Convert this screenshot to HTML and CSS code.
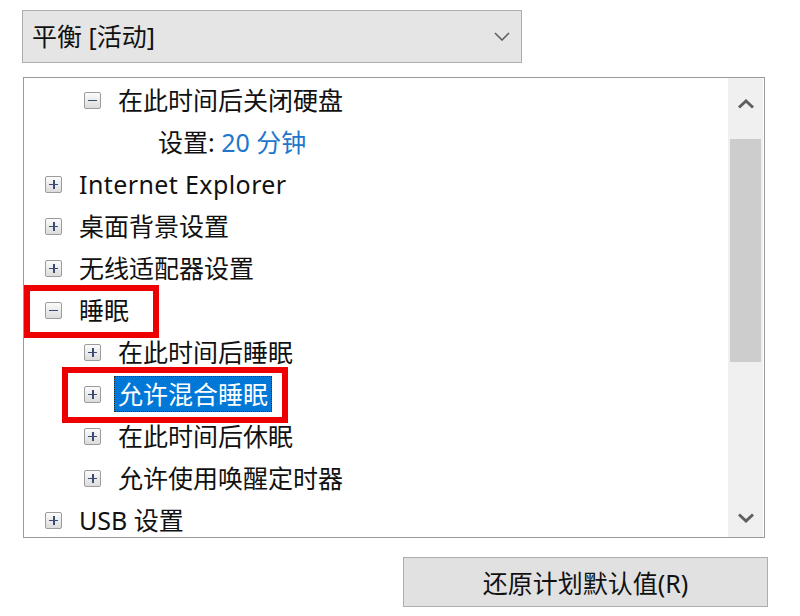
FILE: index.html
```html
<!DOCTYPE html>
<html lang="zh-CN">
<head>
<meta charset="utf-8">
<title>电源选项</title>
<link rel="stylesheet" href="styles.css">
</head>
<body>
<div class="page">
  <div class="combo">
    <span class="combo-text">平衡 [活动]</span>
    <svg class="combo-arrow" width="16" height="9" viewBox="0 0 16 9"><path d="M1 1 L8 8 L15 1" fill="none" stroke="#606060" stroke-width="1.6"/></svg>
  </div>

  <div class="tree">
    <div class="rows">
      <div class="row l1"><span class="box minus"></span><span class="label">在此时间后关闭硬盘</span></div>
      <div class="row l2"><span class="nobox"></span><span class="label">设置: <span class="value">20 分钟</span></span></div>
      <div class="row l0"><span class="box plus"></span><span class="label latin">Internet Explorer</span></div>
      <div class="row l0"><span class="box plus"></span><span class="label">桌面背景设置</span></div>
      <div class="row l0"><span class="box plus"></span><span class="label">无线适配器设置</span></div>
      <div class="row l0"><span class="box minus"></span><span class="label">睡眠</span></div>
      <div class="row l1"><span class="box plus"></span><span class="label">在此时间后睡眠</span></div>
      <div class="row l1"><span class="box plus"></span><span class="label selected">允许混合睡眠</span></div>
      <div class="row l1"><span class="box plus"></span><span class="label">在此时间后休眠</span></div>
      <div class="row l1"><span class="box plus"></span><span class="label">允许使用唤醒定时器</span></div>
      <div class="row l0"><span class="box plus"></span><span class="label">USB 设置</span></div>
    </div>
    <div class="scrollbar">
      <svg class="sb-arrow up" width="18" height="10" viewBox="0 0 18 10"><path d="M2 8.5 L9 2 L16 8.5" fill="none" stroke="#606060" stroke-width="3"/></svg>
      <div class="sb-track"><div class="sb-thumb"></div></div>
      <svg class="sb-arrow down" width="18" height="10" viewBox="0 0 18 10"><path d="M2 1.5 L9 8 L16 1.5" fill="none" stroke="#606060" stroke-width="3"/></svg>
    </div>
    <div class="mark mark-sleep"></div>
    <div class="mark mark-hybrid"></div>
  </div>

  <div class="actions">
    <button class="btn">还原计划默认值(R)</button>
  </div>
</div>
</body>
</html>
```
FILE: styles.css
```css
* { box-sizing: border-box; }
html, body { margin: 0; padding: 0; background: #fff; }
body {
  font-family: "Noto Sans", "Noto Sans CJK SC", sans-serif;
  font-size: 25px;
  color: #111;
}
.page {
  padding: 10px 0 0 22px;
  width: 800px;
}
.combo {
  width: 500px;
  height: 53px;
  background: #e5e5e5;
  border: 1px solid #adadad;
  display: flex;
  align-items: center;
  justify-content: space-between;
  padding: 0 11px 0 9px;
}
.combo-text { line-height: 1; }
.combo-arrow { display: block; }

.tree {
  position: relative;
  margin: 14px 0 0 1px;
  width: 742px;
  height: 461px;
  border: 1px solid #9a9a9a;
  display: flex;
  overflow: hidden;
  background: #fff;
}
.rows {
  flex: 1;
  padding-top: 1px;
  overflow: hidden;
}
.row {
  height: 42px;
  display: flex;
  align-items: center;
  white-space: nowrap;
}
.row.l0 { padding-left: 21px; }
.row.l1 { padding-left: 60px; }
.row.l2 { padding-left: 100px; }
.box, .nobox {
  width: 17px;
  height: 17px;
  flex: none;
  margin-right: 16px;
  position: relative;
}
.box {
  border: 1px solid #9c9c9c;
  border-radius: 2px;
  background: linear-gradient(#fbfbfb, #dcdcdc);
}
.box::before {
  content: "";
  position: absolute;
  left: 3px; right: 3px; top: 7px;
  height: 1.5px;
  background: #3c4a78;
}
.box.plus::after {
  content: "";
  position: absolute;
  top: 3px; bottom: 3px; left: 7px;
  width: 1.5px;
  background: #3c4a78;
}
.label {
  line-height: 34px;
  padding: 0 3px;
  margin-left: -3px;
  border: 1px dotted transparent;
}
.latin { letter-spacing: 0.4px; }
.value { color: #2277cc; }
.selected {
  background: #0078d7;
  color: #fff;
  border-color: #3a2a10;
}

.scrollbar {
  width: 35px;
  margin: 0 1px 0 0;
  background: #f0f0f0;
  display: flex;
  flex-direction: column;
  align-items: center;
}
.sb-arrow { flex: none; }
.sb-arrow.up { margin: 21px 0 8px; }
.sb-arrow.down { margin: 10px 0 14px; }
.sb-track {
  flex: 1;
  width: 100%;
  padding: 22px 2px 0;
}
.sb-thumb {
  height: 223px;
  background: #cdcdcd;
}

.mark {
  position: absolute;
  border: 6px solid #ee0000;
}
.mark-sleep { left: 0; top: 207px; width: 135px; height: 53px; }
.mark-hybrid { left: 38px; top: 289px; width: 226px; height: 56px; }

.actions {
  display: flex;
  justify-content: flex-end;
  width: 746px;
  margin-top: 19px;
}
.btn {
  width: 365px;
  height: 50px;
  background: #e1e1e1;
  border: 1px solid #adadad;
  font-family: "Noto Sans", "Noto Sans CJK SC", sans-serif;
  font-size: 25px;
  color: #111;
  padding: 0;
}
```
